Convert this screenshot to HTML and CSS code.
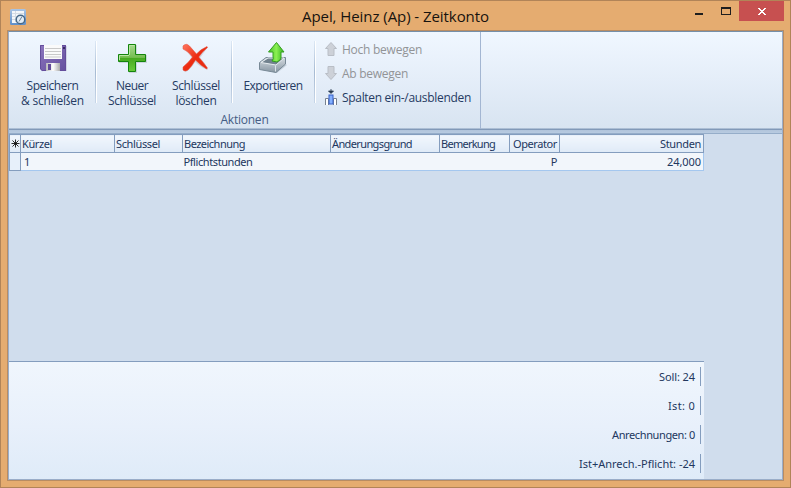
FILE: index.html
```html
<!DOCTYPE html>
<html lang="de">
<head>
<meta charset="utf-8">
<title>Apel, Heinz (Ap) - Zeitkonto</title>
<link rel="stylesheet" href="styles.css">
</head>
<body>
<div class="window">
  <header class="titlebar">
    <svg class="app-icon" width="16" height="16" viewBox="0 0 16 16">
      <defs><linearGradient id="app" x2="0" y2="1"><stop stop-color="#a9c4e4"/><stop offset="1" stop-color="#5f8fc9"/></linearGradient></defs>
      <rect width="16" height="16" rx="1.5" fill="url(#app)"/>
      <rect x="2" y="2" width="12" height="12" fill="#f4f7fa"/>
      <path d="M2 4.500h12M2 7.500h5M2 10.500h4M5.500 2v11" stroke="#d5dce4" fill="none"/>
      <circle cx="10.500" cy="10.500" r="4.300" fill="#e3edf6" stroke="#476887" stroke-width="1.500"/>
      <path d="M9 12.500l3-5" stroke="#6b8298" fill="none"/>
    </svg>
    <h1 class="title">Apel, Heinz (Ap) - Zeitkonto</h1>
    <div class="controls">
      <svg class="minimize" width="8" height="2"><rect width="8" height="2" fill="#1e1e1e"/></svg>
      <svg class="maximize" width="10" height="8"><path d="M0 0h10v8H0zM1 2v5h8V2z" fill="#1e1e1e" fill-rule="evenodd"/></svg>
      <div class="close"><svg width="8" height="7" viewBox="0 0 8 7" shape-rendering="crispEdges"><path d="M0 0h2v1h1v1h2V1h1V0h2v1H7v1H6v1H5v1h1v1h1v1h1v1H6V6H5V5H3v1H2v1H0V6h1V5h1V4h1V3H2V2H1V1H0z" fill="#fff"/></svg></div>
    </div>
  </header>
  <main class="client">
    <section class="ribbon">
      <div class="group">
        <div class="tools">
          <button class="tool save">
            <svg width="32" height="32" viewBox="0 0 32 32">
              <defs><linearGradient id="flop" x2="1" y2="1"><stop stop-color="#8b74bd"/><stop offset="1" stop-color="#65509e"/></linearGradient><linearGradient id="metal" x2="1"><stop stop-color="#b8b8b8"/><stop offset=".5" stop-color="#fff"/><stop offset="1" stop-color="#aaa"/></linearGradient></defs>
              <path d="M5 5h25v25H8l-3-2z" fill="#b9b8d0" opacity=".5"/>
              <path d="M3 4h26v26H5l-2-2z" fill="url(#flop)"/>
              <path d="M3.500 4.500h25v25H5.300l-1.800-1.600z" fill="none" stroke="#644d9b"/>
              <rect x="7" y="4" width="18" height="14" fill="#fafafa"/>
              <path d="M8 7.500h16M8 10.500h16M8 13.500h16M8 16h16" stroke="#c9c9c9"/>
              <rect x="26" y="6" width="2" height="2" fill="#392b66"/>
              <rect x="9" y="22" width="14" height="8" fill="url(#metal)"/><rect x="11" y="23" width="3" height="6" fill="#624b99"/>
            </svg>
            <span class="s1">Speichern</span><span class="s2">&amp; schließen</span>
          </button>
          <i class="sep"></i>
          <button class="tool new">
            <svg width="32" height="32" viewBox="0 0 32 32">
              <defs><linearGradient id="plus" x2="0" y2="1"><stop stop-color="#a8d990"/><stop offset=".48" stop-color="#75bd50"/><stop offset=".5" stop-color="#46a91f"/><stop offset="1" stop-color="#69cb3b"/></linearGradient></defs>
              <path d="M13 4h8v10h10v8H21v10h-8V22H3v-8h10z" fill="#abb7bc" opacity=".5"/>
              <path d="M12.500 3.500h7v10h10v7h-10v10h-7v-10h-10v-7h10z" fill="url(#plus)" stroke="#14850d"/>
              <path d="M13.500 14V4.500h5M3.500 19v-4.500h9.500" fill="none" stroke="#b9e5a2"/>
            </svg>
            <span class="s3">Neuer</span><span class="s4">Schlüssel</span>
          </button>
          <button class="tool delete">
            <svg width="32" height="32" viewBox="0 0 32 32">
              <defs><linearGradient id="cross" x2="1" y2="1"><stop stop-color="#ff7861"/><stop offset=".5" stop-color="#ec2c12"/><stop offset="1" stop-color="#e82a10"/></linearGradient></defs>
              <path d="M4 3Q9 2 16 12Q21 6 28 5L20 16Q25 20 28 28Q20 25 15 20Q11 27 6 30Q2 29 4 26Q9 22 12 16Q7 9 4 7Z" transform="translate(0 1)" fill="#b9b8c1" opacity=".5"/>
              <path d="M4 4Q7 2 9.500 5L16.500 13Q21 8 27 5.500L27.500 6.500Q22 11 18.700 16Q23 21 27.500 27L26.500 28Q20 24 15.500 19Q12 25 8 29Q5 31 3 29V26Q9 21 12.500 16Q8 10 3 8V5Z" fill="url(#cross)" stroke="#e44c37" stroke-width=".5"/>
            </svg>
            <span class="s4">Schlüssel</span><span class="s5">löschen</span>
          </button>
          <i class="sep"></i>
          <button class="tool export">
            <svg width="32" height="32" viewBox="0 0 32 32">
              <defs><linearGradient id="up" x2="1"><stop stop-color="#43be27"/><stop offset=".5" stop-color="#8cf052"/><stop offset="1" stop-color="#32b31e"/></linearGradient><linearGradient id="tray" x2="0" y2="1"><stop stop-color="#d5dce2"/><stop offset="1" stop-color="#8796a2"/></linearGradient></defs>
              <path d="M4 28l16 4 10-8-5-3z" fill="#91a1ad" opacity=".4"/>
              <path d="M2.500 21.500L9 16.500l19.500 0v6.500L19 31.500l-16.500-3z" fill="url(#tray)" stroke="#788996"/>
              <path d="M4 21.500l7-4.500h16l-8 7z" fill="#71818d" stroke="#e7edf1"/>
              <path d="M18.500 24.500v6" stroke="#dce3e8"/>
              <path d="M19.500 1.500L27 11h-3v6q0 2-4 4l-5-1q2-2 1-5v-4h-4.500z" fill="url(#up)" stroke="#349e21"/>
            </svg>
            <span class="s6">Exportieren</span>
          </button>
          <i class="sep"></i>
          <div class="commands">
            <button class="command disabled"><svg width="14" height="16" viewBox="0 0 14 16"><path d="M7 1.500l5.500 6H10v7H4v-7H1.500z" fill="#cdd1d8" stroke="#b9bec6"/></svg><span class="s7">Hoch bewegen</span></button>
            <button class="command disabled"><svg width="14" height="16" viewBox="0 0 14 16"><path d="M7 14.500L1.500 8.500H4v-7h6v7h2.500z" fill="#cdd1d8" stroke="#b9bec6"/></svg><span class="s8">Ab bewegen</span></button>
            <button class="command"><svg width="14" height="16" viewBox="0 0 14 16"><path d="M1.500 16V9.500h3V16M9.500 16V9.500h3V16" fill="#fff" stroke="#77818e"/><rect x="5" y="6" width="4" height="9" fill="#83b0ff" stroke="#365fc4"/><path d="M7 0v3M4.500 2h5L7 4.500z" fill="#26384f" stroke="#26384f" stroke-width=".8"/></svg><span class="s9">Spalten ein-/ausblenden</span></button>
          </div>
        </div>
        <div class="group-title"><span class="s10">Aktionen</span></div>
      </div>
    </section>
    <section class="content">
      <table class="grid">
        <colgroup><col class="c0"><col class="c1"><col class="c2"><col class="c3"><col class="c4"><col class="c5"><col class="c6"><col class="c7"></colgroup>
        <tr class="head"><th class="mark"><svg width="9" height="9" viewBox="0 0 9 9"><path d="M4.500 .5v8M.500 4.500h8M1.500 1.500l6 6M7.500 1.500l-6 6" stroke="#111" stroke-width=".9"/></svg></th><th><span class="t1">Kürzel</span></th><th><span class="t2">Schlüssel</span></th><th><span class="t3">Bezeichnung</span></th><th><span class="t4">Änderungsgrund</span></th><th><span class="t5">Bemerkung</span></th><th class="num"><span class="t6">Operator</span></th><th class="num"><span class="t7">Stunden</span></th></tr>
        <tr class="row"><td class="mark"></td><td class="first">1</td><td></td><td><span class="t8">Pflichtstunden</span></td><td></td><td></td><td class="num">P</td><td class="num"><span class="t9">24,000</span></td></tr>
      </table>
      <div class="summary">
        <div><span class="u1">Soll: 24</span></div>
        <div><span class="u2">Ist: 0</span></div>
        <div><span class="u3">Anrechnungen: 0</span></div>
        <div><span class="u4">Ist+Anrech.-Pflicht: -24</span></div>
      </div>
    </section>
  </main>
</div>
<script src="fit.js"></script>
</body>
</html>
```
FILE: styles.css
```css
* { box-sizing: border-box; }
body { margin: 0; overflow: hidden; }
button { border: 0; padding: 0; margin: 0; background: none; font: inherit; color: inherit; }
svg { display: block; flex: none; }
.window { width: 791px; height: 488px; border: 1px solid #b18458; background: #e5ac70; padding: 0 7px 7px; display: flex; flex-direction: column; }
.titlebar { height: 30px; flex: none; display: flex; align-items: flex-start; }
.app-icon { margin: 8px 0 0 2px; }
.title { margin: 5px 0 0 276px; width: 187px; font: 400 15px/21px "Open Sans", sans-serif; color: #17130f; white-space: nowrap; }
.controls { margin: 0 -1px 0 auto; display: flex; }
.minimize { margin: 12px 18px 0 0; }
.maximize { margin: 6px 8px 0 0; }
.close { width: 45px; height: 20px; background: #c75050; display: grid; place-items: center; }
.client { width: 775px; height: 449px; border: 1px solid #9aadc8; border-top-color: #758fa9; outline: 1px solid #b88c63; display: flex; flex-direction: column; }
.ribbon { height: 102px; flex: none; display: flex; background: linear-gradient(#f0f7ff, #e5eef9 45%, #d8e4f1 96px, #8199b8 97px, #8199b8 98px, #b1c4db 98px, #b8cbe1); border-bottom: 1px solid #95adc9; }
.group { width: 472px; height: 97px; padding-top: 9px; border-right: 1px solid #a3b6d2; font: 12px/15px "Open Sans", sans-serif; color: #263b63; }
.tools { display: flex; height: 70px; }
.tool { display: flex; flex-direction: column; align-items: center; text-align: center; white-space: nowrap; }
.tool svg { margin-bottom: 5px; }
.save { width: 86px; padding-left: 1px; }
.new { width: 71px; padding-left: 1px; }
.delete { width: 64px; padding-right: 6px; }
.export { width: 82px; }
.sep { width: 1px; height: 62px; background: linear-gradient(#dce8f5, #a7bbd3 50%, #c7d6e8); box-shadow: 1px 0 #fff; }
.commands { padding: 0 0 0 9px; margin-top: -4px; }
.command { display: flex; align-items: center; gap: 4px; height: 24px; white-space: nowrap; }
.disabled { color: #929497; }
.group-title { text-align: center; margin-top: 1px; color: #455d84; }
.content { flex: 1; background: #d0dded; display: flex; flex-direction: column; justify-content: space-between; font: 11px/14px "Noto Sans", sans-serif; color: #22375e; }
.grid { width: 695px; height: 37px; table-layout: fixed; border-collapse: collapse; }
.c0 { width: 11px; } .c1 { width: 94px; } .c2 { width: 68px; } .c3 { width: 148px; } .c4 { width: 109px; } .c5 { width: 70px; } .c6 { width: 50px; } .c7 { width: 144px; }
.grid th, .grid td { height: 18px; padding: 0 2px 0 1px; text-align: left; font-weight: 400; white-space: nowrap; overflow: hidden; }
.grid th { border: 1px solid #849dbe; background: linear-gradient(#f2f7fd, #dfeaf7); }
.grid td { background: #f2f6fb; border-bottom: 1px solid #a4c7ef; }
.grid td:last-child { border-right: 1px solid #a4c7ef; }
.grid .mark { padding: 0 0 0 1px; }
.grid td.mark { background: #e7f0fa; border: 1px solid #849dbe; }
.grid .num { text-align: right; }
.grid td.first { padding-left: 3px; }
.summary { width: 695px; height: 118px; padding-top: 5px; border-top: 1px solid #849dbe; background: linear-gradient(#f0f6fd, #e8f0fb 55%, #dfebf8); }
.summary div { width: 692px; height: 19px; margin-bottom: 10px; padding-right: 5px; border-right: 1px solid #849dbe; text-align: right; line-height: 20px; }
```
FILE: fit.js
```js
const widths = {
  title: 187, s1: 52, s2: 63, s3: 32, s4: 48, s5: 41, s6: 59, s7: 80, s8: 66, s9: 129, s10: 48,
  t1: 30, t2: 44, t3: 61, t4: 80, t5: 54, t6: 44, t7: 41, t8: 69, t9: 34,
  u1: 36, u2: 27, u3: 83, u4: 116
};
for (const [name, width] of Object.entries(widths)) {
  for (const label of document.querySelectorAll('.' + name)) {
    const range = document.createRange();
    range.selectNodeContents(label);
    label.style.letterSpacing = '0';
    const gap = (width - range.getBoundingClientRect().width) / label.textContent.length;
    label.style.letterSpacing = gap + 'px';
  }
}
```
